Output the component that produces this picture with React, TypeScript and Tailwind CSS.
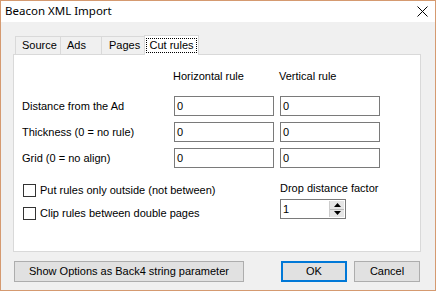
import { useState } from "react";

const tabs = ["Source", "Ads", "Pages", "Cut rules"];

const rows = [
  "Distance from the Ad",
  "Thickness (0 = no rule)",
  "Grid (0 = no align)",
];

function TextBox({ value }: { value: string }) {
  return (
    <div className="flex h-[20px] w-[100px] items-center border border-[#7a7a7a] bg-white pl-[2px] text-[11px] text-black">
      {value}
    </div>
  );
}

function CheckRow({ label }: { label: string }) {
  return (
    <div className="flex h-[13px] items-center gap-[4px]">
      <div className="size-[13px] border border-[#333333] bg-white" />
      <span>{label}</span>
    </div>
  );
}

export default function App() {
  const [active] = useState("Cut rules");

  return (
    <div
      className="flex h-[291px] w-[436px] flex-col border border-[#d59a70] bg-[#f0f0f0] text-[11px] text-black"
      style={{ fontFamily: '"Liberation Sans", Arial, sans-serif' }}
    >
      {/* Title bar */}
      <div className="flex h-[21px] shrink-0 items-center justify-between bg-white pb-px pl-[4px] pr-[7px]">
        <span className="text-[11.5px]" style={{ fontFamily: '"Noto Sans", sans-serif' }}>
          Beacon XML Import
        </span>
        <svg width="11" height="11" viewBox="0 0 11 11">
          <path d="M0.5 0.5 L10.5 10.5 M10.5 0.5 L0.5 10.5" stroke="#000" strokeWidth="1" />
        </svg>
      </div>

      {/* Tabs */}
      <div className="ml-[14px] mt-[13px] flex h-[19px] items-end">
        {tabs.map((t) => {
          const sel = t === active;
          const w = t === "Source" ? "w-[45px]" : t === "Ads" ? "w-[41px]" : t === "Pages" ? "w-[43px]" : "w-[55px]";
          return sel ? (
            <div
              key={t}
              className={`relative z-10 -mb-px flex h-[20px] ${w} items-center justify-center border border-b-0 border-[#d9d9d9] bg-white`}
            >
              <span className="border border-dotted border-black px-[2px] leading-[13px]">{t}</span>
            </div>
          ) : (
            <div
              key={t}
              className={`flex h-[18px] ${w} items-center border border-b-0 border-r-0 border-[#d9d9d9] ${
                t === "Pages" ? "pl-[7px]" : "pl-[6px]"
              }`}
            >
              {t}
            </div>
          );
        })}
      </div>

      {/* Tab panel */}
      <div className="ml-[12px] flex h-[198px] w-[408px] flex-col border border-[#d9d9d9] bg-white pl-[8px]">
        <div className="mt-[15px] flex h-[13px] items-center">
          <span className="ml-[151px] w-[106px]">Horizontal rule</span>
          <span>Vertical rule</span>
        </div>
        <div className="mt-[13px] flex flex-col gap-[6px]">
          {rows.map((r) => (
            <div key={r} className="flex items-center">
              <span className="w-[152px]">{r}</span>
              <div className="flex gap-[6px]">
                <TextBox value="0" />
                <TextBox value="0" />
              </div>
            </div>
          ))}
        </div>
        <div className="mt-[13px] flex">
          <div className="ml-[1px] flex w-[257px] flex-col gap-[10px] pt-[3px]">
            <CheckRow label="Put rules only outside (not between)" />
            <CheckRow label="Clip rules between double pages" />
          </div>
          <div className="flex flex-col">
            <span className="h-[15px] leading-[15px]">Drop distance factor</span>
            <div className="mt-[3px] flex h-[20px] w-[66px] items-stretch border border-[#7a7a7a] bg-white">
              <span className="flex flex-1 items-center pl-[2px]">1</span>
              <div className="my-px mr-px flex w-[15px] flex-col border-l border-[#cccccc]">
                <div className="flex flex-1 items-center justify-center bg-[#e6e6e6]">
                  <svg width="7" height="4" viewBox="0 0 7 4">
                    <path d="M3.5 0 L7 4 L0 4 Z" fill="#000" />
                  </svg>
                </div>
                <div className="h-px bg-[#bbbbbb]" />
                <div className="flex flex-1 items-center justify-center bg-[#e6e6e6]">
                  <svg width="7" height="4" viewBox="0 0 7 4">
                    <path d="M0 0 L7 0 L3.5 4 Z" fill="#000" />
                  </svg>
                </div>
              </div>
            </div>
          </div>
        </div>
      </div>

      {/* Buttons */}
      <div className="ml-[13px] mt-[9px] flex items-center">
        <button className="h-[21px] w-[230px] border border-[#adadad] bg-[#e1e1e1] text-[11px]">
          Show Options as Back4 string parameter
        </button>
        <button className="ml-[37px] h-[21px] w-[66px] border-2 border-[#0078d7] bg-[#e1e1e1] text-[11px]">
          OK
        </button>
        <button className="ml-[7px] h-[21px] w-[66px] border border-[#adadad] bg-[#e1e1e1] text-[11px]">
          Cancel
        </button>
      </div>
    </div>
  );
}
